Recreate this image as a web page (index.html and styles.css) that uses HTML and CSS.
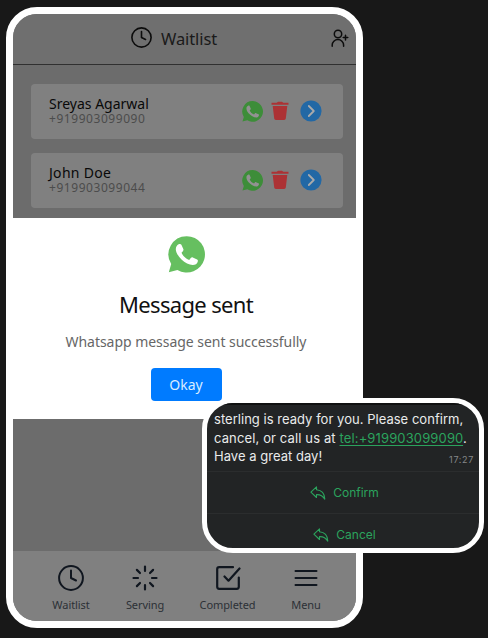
FILE: index.html
```
<!DOCTYPE html>
<html lang="en">
<head>
<meta charset="utf-8">
<title>Waitlist</title>
<link rel="stylesheet" href="styles.css">
</head>
<body>
<svg width="0" height="0" class="defs" aria-hidden="true">
  <symbol id="clock" viewBox="0 0 26 26"><g fill="none" stroke="currentColor" stroke-linecap="round" stroke-linejoin="round"><circle cx="13" cy="13" r="11.9" stroke-width="2"/><path d="M13 5.5V13l5 2.5" stroke-width="2"/></g></symbol>
  <symbol id="chat" viewBox="0 0 37 37"><path fill="currentColor" d="M18.7.2A18.2 18.2 0 0 0 3.200 28L.8 36.200l8.600-2.200A18.200 18.200 0 1 0 18.700.2z"/><path class="handset" d="M10.600 8.300c1-.5 2.300-.5 2.800.4l2 4.500c.3.800-.1 1.500-.7 2.200l-1.200 1.400c1.600 3.300 4.200 5.700 7.700 7.200l1.800-2.200c.5-.6 1.100-.7 1.800-.4l4.300 2.100c.8.400.9 1 .7 1.900-.5 2.300-2.600 3.500-5 3.600-3.300.1-7.900-2.200-11.300-5.500-3.400-3.300-5.700-7.200-5.700-10.300 0-2.300 1.200-4.100 2.800-4.900z"/></symbol>
  <symbol id="trash" viewBox="0 0 18 20"><path fill="currentColor" d="M.5 1.800h5.200L7 .7h4l1.300 1.100h5.200v2H.5zM1.700 5h14.600l-1.500 12.500q-.2 1.400-1.600 1.400H4.800q-1.400 0-1.600-1.400z"/></symbol>
  <symbol id="next" viewBox="0 0 22 22"><circle cx="11" cy="11" r="10.600" fill="currentColor"/><path class="chevron" d="M8.800 6l5 5-5 5"/></symbol>
  <symbol id="reply" viewBox="0 0 16 14"><path d="M6.500.8.900 6.200l5.600 5.300V8.600c3.500-.2 6 .8 8.300 4.500-.2-5-2.800-8.800-8.300-9.300z" fill="none" stroke="currentColor" stroke-width="1.100" stroke-linejoin="round"/></symbol>
</svg>
<main class="phone">
  <header class="topbar">
    <svg class="topbar-clock"><use href="#clock"/></svg>
    <h1>Waitlist</h1>
    <svg class="add-user" viewBox="0 0 18 19"><g fill="none" stroke="currentColor" stroke-width="1.500" stroke-linecap="round"><circle cx="7" cy="5" r="3.700"/><path d="M1.200 17.200v-1.100a5.700 5.500 0 0 1 11.400 0v1.100M12.200 8.600h4.600M14.500 6.300v4.600"/></g></svg>
  </header>
  <section class="list">
    <article class="card">
      <div class="person"><div class="name">Sreyas Agarwal</div><div class="number">+919903099090</div></div>
      <svg class="chat-icon"><use href="#chat"/></svg><svg class="trash-icon"><use href="#trash"/></svg><svg class="next-icon"><use href="#next"/></svg>
    </article>
    <article class="card">
      <div class="person"><div class="name name-short">John Doe</div><div class="number">+919903099044</div></div>
      <svg class="chat-icon"><use href="#chat"/></svg><svg class="trash-icon"><use href="#trash"/></svg><svg class="next-icon"><use href="#next"/></svg>
    </article>
  </section>
  <section class="dialog">
    <svg class="dialog-icon"><use href="#chat"/></svg>
    <h2>Message sent</h2>
    <p>Whatsapp message sent successfully</p>
    <button>Okay</button>
  </section>
  <nav class="tabs">
    <div class="tab tab-wait"><svg viewBox="0 0 26 26"><use href="#clock"/></svg><span>Waitlist</span></div>
    <div class="tab tab-serve"><svg viewBox="0 0 26 26"><path d="M13 1.500v4.500M13 20v4.500M1.500 13H6M20 13h4.500M4.900 4.900 8 8M18 18l3.100 3.100M4.900 21.100 8 18M18 8l3.100-3.100" fill="none" stroke="currentColor" stroke-width="2.200" stroke-linecap="round"/></svg><span>Serving</span></div>
    <div class="tab tab-done"><svg viewBox="0 0 26 26"><path d="M18 2.200H4.200q-2 0-2 2v17.600q0 2 2 2h17.600q2 0 2-2V12.500M9.500 11.500l4 4.200L24.500 3.500" fill="none" stroke="currentColor" stroke-width="2.200" stroke-linecap="round" stroke-linejoin="round"/></svg><span>Completed</span></div>
    <div class="tab tab-menu"><svg viewBox="0 0 26 26"><path d="M2.500 6h21M2.500 13h21M2.500 20h21" stroke="currentColor" stroke-width="2" stroke-linecap="round"/></svg><span>Menu</span></div>
  </nav>
</main>
<aside class="bubble">
  <div class="message">
    <div class="line">sterling is ready for you. Please confirm,</div>
    <div class="line l2">cancel, or call us at <a>tel:+919903099090</a>.</div>
    <div class="line l3"><span>Have a great day!</span><time>17:27</time></div>
  </div>
  <div class="action"><svg><use href="#reply"/></svg><span>Confirm</span></div>
  <div class="action"><svg><use href="#reply"/></svg><span>Cancel</span></div>
</aside>
</body>
</html>
```
FILE: styles.css
```
* { box-sizing: border-box; }
body {
  margin: 0;
  height: 638px;
  padding: 7px 0 0 6px;
  overflow: hidden;
  background: #181818;
  font-family: "Noto Sans", "Open Sans", sans-serif;
}
.defs { position: absolute; }
svg { display: block; flex: none; }
h1, h2, p { margin: 0; font-weight: 400; }
.phone {
  display: flex;
  flex-direction: column;
  width: 357px;
  height: 621px;
  border: 7px solid #fff;
  border-radius: 31px;
  overflow: hidden;
  background: #6c6c6c;
}
.topbar {
  display: flex;
  align-items: center;
  height: 51px;
  flex: none;
  padding-left: 118px;
  border-bottom: 1px solid #303030;
  background: #6f6f6f;
  color: #0c0c0c;
}
.topbar-clock { width: 21px; height: 21px; margin-bottom: 4px; }
h1 { width: 60px; margin: 0 0 1px 9px; font-size: 16.500px; line-height: 24px; letter-spacing: -.1px; color: #1a1a1a; white-space: nowrap; }
.add-user { width: 18px; height: 19px; margin-left: 110px; margin-bottom: 2px; }
.list {
  display: flex;
  flex-direction: column;
  gap: 14px;
  padding: 19px 13px 10px 18px;
}
.card {
  display: flex;
  align-items: center;
  height: 55px;
  padding: 0 21px 1px 18px;
  border-radius: 4px;
  background: #808080;
}
.person { flex: 1; }
.name { margin-top: -2px; color: #090909; font-size: 14px; line-height: 16px; white-space: nowrap; }
.name-short { letter-spacing: .3px; }
.number { color: #4c4c4c; font-size: 12px; line-height: 13px; letter-spacing: .55px; }
.chat-icon { width: 21px; height: 21px; color: #3d8d39; --handset: #929292; }
.handset { fill: var(--handset); }
.trash-icon { width: 18px; height: 20px; margin-left: 8px; color: #ac3235; }
.next-icon { width: 22px; height: 22px; margin-left: 11px; color: #2268a5; }
.chevron { fill: none; stroke: #aaa; stroke-width: 1.800; stroke-linecap: round; stroke-linejoin: round; }
.dialog {
  display: flex;
  flex-direction: column;
  align-items: center;
  height: 201px;
  flex: none;
  padding: 18px 0 0 3px;
  background: #fff;
}
.dialog-icon { width: 37px; height: 37px; color: #66bf60; --handset: #fff; }
h2 { margin-top: 16px; color: #111; font-size: 22px; line-height: 30px; letter-spacing: -.67px; }
p { margin-top: 13px; color: #666; font-size: 14px; line-height: 20px; letter-spacing: -.04px; white-space: nowrap; }
button {
  width: 71px;
  height: 33px;
  margin-top: 16px;
  padding: 0;
  border: 0;
  border-radius: 4px;
  background: #007bff;
  color: #d9ecff;
  font: 14px/32px "Noto Sans", sans-serif;
}
.tabs {
  display: flex;
  height: 70px;
  margin-top: auto;
  padding: 14px 12px 0 20px;
  background: #808080;
  color: #10161f;
}
.tab { display: flex; flex-direction: column; align-items: center; }
.tab svg { width: 26px; height: 26px; }
.tab span { margin-top: 5px; color: #2c3036; font-size: 11px; line-height: 18px; letter-spacing: -.08px; }
.tab-wait { width: 76px; }
.tab-serve { width: 72px; }
.tab-done { width: 93px; }
.tab-menu { width: 64px; }
.bubble {
  position: absolute;
  left: 202px;
  top: 398px;
  width: 282px;
  height: 155px;
  border: 5px solid #fff;
  border-radius: 31px;
  overflow: hidden;
  background: #222425;
  color: #e9ebeb;
  font-family: Inter, sans-serif;
}
.message { height: 69px; padding: 5px 5px 0 7px; border-top: 2px solid #101111; border-bottom: 1px solid #2b2d2e; }
.line { font-size: 13px; line-height: 18.500px; letter-spacing: .03px; white-space: nowrap; }
.l2 { letter-spacing: .13px; }
.line a { color: #2ba35d; text-decoration: underline; text-underline-offset: 2px; }
.l3 { display: flex; justify-content: space-between; }
time { padding-top: 4px; color: #858889; font-size: 9px; letter-spacing: .65px; }
.action {
  display: flex;
  align-items: center;
  justify-content: center;
  gap: 7px;
  height: 42px;
  padding-left: 3px;
  border-bottom: 1px solid #2b2d2e;
  color: #2ba35d;
  font-size: 12px;
}
.action svg { width: 16px; height: 14px; }
```
